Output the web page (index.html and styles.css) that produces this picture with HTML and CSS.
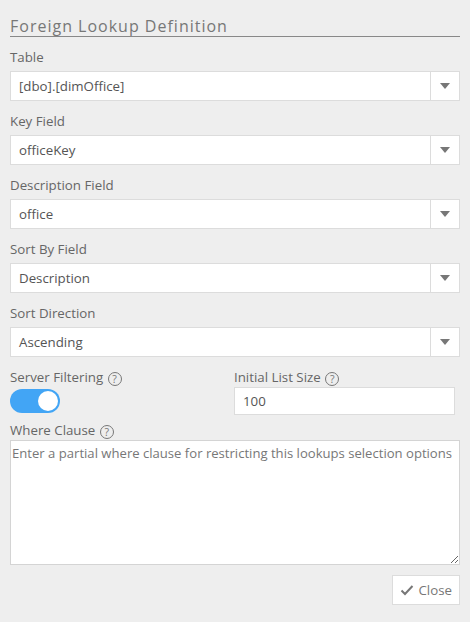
FILE: index.html
```html
<!DOCTYPE html>
<html lang="en">
<head>
    <meta charset="UTF-8">
    <title>Foreign Lookup Definition</title>
    <link rel="stylesheet" href="styles.css">
</head>
<body>
    <div class="panel">
        <h2 class="panel-title">Foreign Lookup Definition</h2>

        <div class="field">
            <label>Table</label>
            <div class="select">
                <span class="select-value">[dbo].[dimOffice]</span>
                <span class="select-btn"><span class="caret"></span></span>
            </div>
        </div>

        <div class="field">
            <label>Key Field</label>
            <div class="select">
                <span class="select-value">officeKey</span>
                <span class="select-btn"><span class="caret"></span></span>
            </div>
        </div>

        <div class="field">
            <label>Description Field</label>
            <div class="select">
                <span class="select-value">office</span>
                <span class="select-btn"><span class="caret"></span></span>
            </div>
        </div>

        <div class="field">
            <label>Sort By Field</label>
            <div class="select">
                <span class="select-value">Description</span>
                <span class="select-btn"><span class="caret"></span></span>
            </div>
        </div>

        <div class="field">
            <label>Sort Direction</label>
            <div class="select">
                <span class="select-value">Ascending</span>
                <span class="select-btn"><span class="caret"></span></span>
            </div>
        </div>

        <div class="row">
            <div class="col">
                <label>Server Filtering <span class="help">?</span></label>
                <div class="toggle on"><span class="knob"></span></div>
            </div>
            <div class="col col-right">
                <label>Initial List Size <span class="help">?</span></label>
                <input class="text-input" type="text" value="100">
            </div>
        </div>

        <div class="where">
            <label>Where Clause <span class="help">?</span></label>
            <textarea class="textarea" placeholder="Enter a partial where clause for restricting this lookups selection options"></textarea>
        </div>

        <div class="actions">
            <button class="btn">
                <svg width="14" height="12" viewBox="0 0 14 12"><path d="M1.5 6.5 L5 10 L12.5 2" fill="none" stroke="#777" stroke-width="2"/></svg>
                Close
            </button>
        </div>
    </div>
</body>
</html>
```

FILE: styles.css
```css
* {
    margin: 0;
    padding: 0;
    box-sizing: border-box;
}

body {
    font-family: 'Open Sans', 'Noto Sans', sans-serif;
    font-size: 13.3px;
    color: #666;
    background: #eeeeee;
}

.panel {
    padding: 16px 10px 10px 10px;
}

.panel-title {
    font-size: 16px;
    font-weight: 400;
    letter-spacing: 1px;
    color: #777;
    line-height: 20px;
    border-bottom: 1px solid #888;
    margin-bottom: 10px;
}

label {
    display: block;
    line-height: 20px;
    color: #666;
}

.field {
    margin-bottom: 10px;
}

.field label {
    margin-bottom: 4px;
}

.select {
    display: flex;
    height: 30px;
    background: #fff;
    border: 1px solid #dcdcdc;
}

.select-value {
    flex-grow: 1;
    padding: 0 8px;
    line-height: 28px;
    color: #555;
}

.select-btn {
    width: 29px;
    border-left: 1px solid #dcdcdc;
    display: flex;
    align-items: center;
    justify-content: center;
}

.caret {
    width: 0;
    height: 0;
    border-left: 5px solid transparent;
    border-right: 5px solid transparent;
    border-top: 6px solid #777;
}

.row {
    display: flex;
    margin-bottom: 5px;
}

.col {
    flex: 0 0 224px;
}

.col-right {
    flex: 0 0 221px;
}

.help {
    display: inline-block;
    width: 14px;
    height: 14px;
    margin-left: 1px;
    border: 1px solid #777;
    border-radius: 50%;
    font-size: 10.5px;
    line-height: 12px;
    text-align: center;
    vertical-align: -1px;
    color: #777;
}

.toggle {
    width: 50px;
    height: 24px;
    margin-top: 2px;
    border-radius: 12px;
    background: #42a5f5;
    display: flex;
    align-items: center;
    justify-content: flex-end;
    padding: 0 2px;
}

.knob {
    width: 20px;
    height: 20px;
    border-radius: 50%;
    background: #fff;
}

.text-input {
    display: block;
    width: 221px;
    height: 28px;
    border: 1px solid #dcdcdc;
    background: #fff;
    font: inherit;
    color: #555;
    padding: 0 8px;
    outline: none;
}

.textarea {
    display: block;
    width: 450px;
    height: 125px;
    border: 1px solid #d4d4d4;
    background: #fff;
    font: inherit;
    font-size: 13.1px;
    color: #555;
    padding: 3px 1px;
    resize: vertical;
    outline: none;
}

.textarea::placeholder {
    color: #777;
}

.actions {
    display: flex;
    justify-content: flex-end;
    margin-top: 10px;
}

.btn {
    display: flex;
    align-items: center;
    gap: 4px;
    height: 30px;
    padding: 0 7px;
    border: 1px solid #dcdcdc;
    background: #fff;
    font: inherit;
    color: #777;
}
```
